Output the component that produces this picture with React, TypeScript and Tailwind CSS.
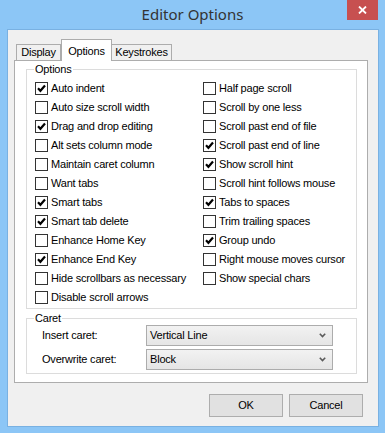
import React from "react";

const leftItems: [string, boolean][] = [
  ["Auto indent", true],
  ["Auto size scroll width", false],
  ["Drag and drop editing", true],
  ["Alt sets column mode", false],
  ["Maintain caret column", false],
  ["Want tabs", false],
  ["Smart tabs", true],
  ["Smart tab delete", true],
  ["Enhance Home Key", false],
  ["Enhance End Key", true],
  ["Hide scrollbars as necessary", false],
  ["Disable scroll arrows", false],
];

const rightItems: [string, boolean][] = [
  ["Half page scroll", false],
  ["Scroll by one less", false],
  ["Scroll past end of file", false],
  ["Scroll past end of line", true],
  ["Show scroll hint", true],
  ["Scroll hint follows mouse", false],
  ["Tabs to spaces", true],
  ["Trim trailing spaces", false],
  ["Group undo", true],
  ["Right mouse moves cursor", false],
  ["Show special chars", false],
];

function Check({ label, checked }: { label: string; checked: boolean }) {
  return (
    <div className="flex h-[19px] items-center">
      <div className="flex h-[13px] w-[13px] shrink-0 items-center justify-center border border-[#333333] bg-white">
        {checked && (
          <svg width="11" height="11" viewBox="0 0 11 11">
            <path d="M2 5.3 L4.4 7.8 L9 2.6" fill="none" stroke="#000" strokeWidth="2.2" />
          </svg>
        )}
      </div>
      <span className="ml-[3px] whitespace-nowrap leading-none">{label}</span>
    </div>
  );
}

function Select({ value }: { value: string }) {
  return (
    <div className="flex h-[21px] w-[187px] items-center justify-between border border-[#acacac] bg-gradient-to-b from-[#f2f2f2] to-[#e5e5e5] pl-[3px] pr-[6px]">
      <span className="leading-none">{value}</span>
      <svg width="7" height="5" viewBox="0 0 7 5">
        <path d="M0.8 0.8 L3.5 3.6 L6.2 0.8" fill="none" stroke="#5a5a5a" strokeWidth="1.6" />
      </svg>
    </div>
  );
}

export default function App() {
  return (
    <div className="h-[433px] w-[385px] overflow-hidden bg-[#8cc6f6] text-[11px] tracking-[-0.2px] text-black [font-family:'Liberation_Sans',Arial,sans-serif]">
      <div className="relative flex h-[29px] items-center justify-center">
        <span className="text-[15px] tracking-normal text-[#333333] [font-family:'Noto_Sans',sans-serif]">
          Editor Options
        </span>
        <div className="absolute right-[7px] top-0 flex h-[20px] w-[31px] items-center justify-center bg-[#c75050]">
          <svg width="9" height="8" viewBox="0 0 9 8">
            <path d="M1 0.5 L8 7.5 M8 0.5 L1 7.5" stroke="#fff" strokeWidth="1.8" />
          </svg>
        </div>
      </div>
      <div className="ml-[7px] h-[398px] w-[372px] border border-[#79b1e2]">
        <div className="flex h-full w-full flex-col bg-[#f0f0f0]">
          <div className="ml-[8px] mt-[9px] flex h-[21px] items-end">
            <div className="flex h-[16px] w-[45px] items-center justify-center border-l border-r border-t border-[#acacac] bg-[#f0f0f0]">
              Display
            </div>
            <div className="relative z-10 -mb-px flex h-[22px] w-[51px] items-start justify-center border-l border-r border-t border-[#acacac] bg-white pt-[3px]">
              Options
            </div>
            <div className="flex h-[16px] w-[60px] items-center justify-center border-r border-t border-[#acacac] bg-[#f0f0f0]">
              Keystrokes
            </div>
          </div>
          <div className="ml-[6px] flex h-[323px] w-[354px] flex-col border border-[#adadad] bg-white">
            <div className="relative ml-[11px] mt-[8px] h-[240px] w-[331px] border border-[#dcdcdc]">
              <span className="absolute -top-[7px] left-[7px] bg-white px-[1px] leading-[13px]">Options</span>
              <div className="flex pl-[8px] pt-[9px]">
                <div className="flex w-[168px] flex-col">
                  {leftItems.map(([l, c]) => (
                    <Check key={l} label={l} checked={c} />
                  ))}
                </div>
                <div className="flex flex-col">
                  {rightItems.map(([l, c]) => (
                    <Check key={l} label={l} checked={c} />
                  ))}
                </div>
              </div>
            </div>
            <div className="relative ml-[11px] mt-[9px] h-[56px] w-[331px] border border-[#dcdcdc]">
              <span className="absolute -top-[7px] left-[7px] bg-white px-[1px] leading-[13px]">Caret</span>
              <div className="flex flex-col gap-[3px] pl-[15px] pt-[6px]">
                <div className="flex items-center">
                  <span className="w-[104px]">Insert caret:</span>
                  <Select value="Vertical Line" />
                </div>
                <div className="flex items-center">
                  <span className="w-[104px]">Overwrite caret:</span>
                  <Select value="Block" />
                </div>
              </div>
            </div>
          </div>
          <div className="mt-[11px] flex justify-end gap-[6px] pr-[15px]">
            <div className="flex h-[23px] w-[74px] items-center justify-center border border-[#adadad] bg-[#e1e1e1]">
              OK
            </div>
            <div className="flex h-[23px] w-[74px] items-center justify-center border border-[#adadad] bg-[#e1e1e1]">
              Cancel
            </div>
          </div>
        </div>
      </div>
    </div>
  );
}
